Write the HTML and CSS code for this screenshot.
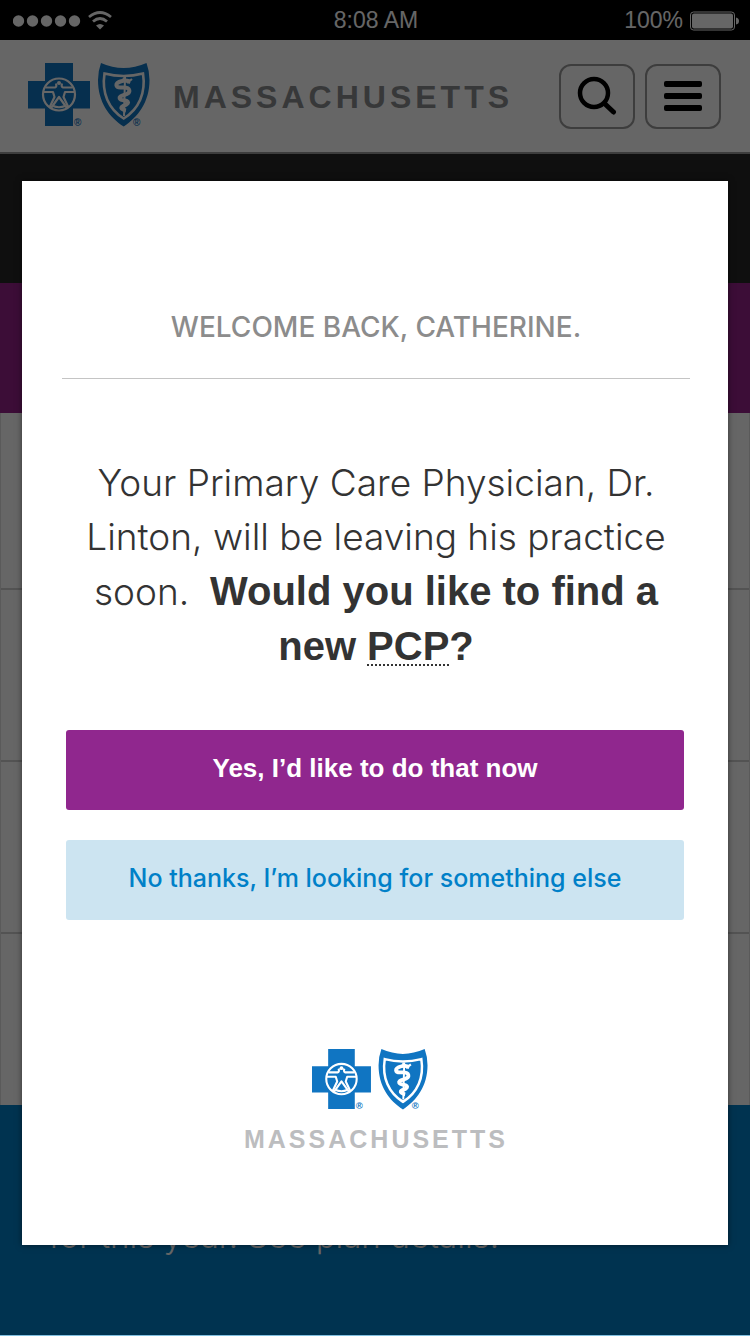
FILE: index.html
```html
<!DOCTYPE html>
<html lang="en">
<head>
<meta charset="utf-8">
<meta name="viewport" content="width=device-width, initial-scale=1">
<title>Welcome back</title>
<link rel="stylesheet" href="styles.css">
</head>
<body>
<svg class="sprite" aria-hidden="true">
  <symbol id="logo" viewBox="0 0 122 66">
    <path class="logo-blue" d="M17 0H45V18H62V45.500H45V63H17V45.500H0V18H17Z"/>
    <g class="logo-line" transform="translate(31 31.500)">
      <circle r="16"/>
      <path d="M-13.500 -7H-4Q-2 -7.500 -3 -11M13.500 -7H4Q2 -7.500 3 -11"/>
      <path d="M-15.500 -2.500H-6L-4.500 2.500L-9.500 13M15.500 -2.500H6L4.500 2.500L9.500 13"/>
      <path d="M-8 13.500L0 2.500L8 13.500"/>
      <path d="M-6 11.500Q0 14 6 11.500"/>
      <circle class="logo-head" cy="-11.500" r="2"/>
    </g>
    <path class="logo-blue" d="M73 0Q95.500 10 118.500 0Q121.500 8 121.500 17C121.500 39 110 54 95.700 63.500C81 54 70 39 70 17Q70 8 73 0Z"/>
    <path class="logo-border" d="M76.500 10.500Q95.500 15.500 115 10.500C118 30 111 46 95.700 55.500C80.500 46 73.500 30 76.500 10.500Z"/>
    <path class="logo-staff" d="M97 14L96 53"/>
    <path class="logo-snake" d="M102 18.500Q97 17 94 18C86 20 87 25 94 24.500C103 24 104 30 96 32C89 34 91 37 97 37.500C103 39 99 42 95 43C91 45 95 47 98 47.500"/>
    <path class="logo-line" d="M95 15L102 20M104 16L99 20"/>
  </symbol>
</svg>

<div class="screen">
  <div class="page">
    <div class="status">
      <div class="signal">
        <svg width="100" height="24" viewBox="0 0 100 24" fill="#fff">
          <circle cx="5.500" cy="12" r="5.700"/><circle cx="19.500" cy="12" r="5.700"/><circle cx="33.500" cy="12" r="5.700"/><circle cx="47.500" cy="12" r="5.700"/><circle cx="61.500" cy="12" r="5.700"/>
          <g fill="none" stroke="#fff" stroke-width="2.800"><path d="M76 8Q87 -1 98 8"/><path d="M80 12.500Q87 6.500 94 12.500"/></g>
          <path d="M83 16.500Q87 13.500 91 16.500L87 20.500Z"/>
        </svg>
      </div>
      <div class="clock">8:08 AM</div>
      <div class="battery">
        <span>100%</span>
        <svg width="49" height="20" viewBox="0 0 49 20">
          <rect x="0.500" y="1" width="44" height="18" rx="3" fill="none" stroke="#fff"/>
          <rect x="2" y="2.500" width="41" height="15" rx="2" fill="#fff"/>
          <path d="M46 6.500Q49 7 49 10Q49 13 46 13.500Z" fill="#fff"/>
        </svg>
      </div>
    </div>

    <header class="header">
      <svg class="header-logo" viewBox="0 0 122 66" role="img" aria-label="Blue Cross Blue Shield">
        <use href="#logo"/>
        <text class="logo-mark" x="46" y="63">®</text>
        <text class="logo-mark" x="105" y="63">®</text>
      </svg>
      <span class="header-name">MASSACHUSETTS</span>
      <button class="tool" type="button" aria-label="Search">
        <svg width="40" height="40" viewBox="0 0 40 40" fill="none" stroke="#000"><circle cx="17" cy="17" r="14" stroke-width="4.500"/><path d="M27.500 27.500L36.500 36" stroke-width="5" stroke-linecap="round"/></svg>
      </button>
      <button class="tool" type="button" aria-label="Menu">
        <svg width="38" height="30" viewBox="0 0 38 30"><rect width="38" height="6" rx="2"/><rect y="12" width="38" height="6" rx="2"/><rect y="24" width="38" height="6" rx="2"/></svg>
      </button>
    </header>

    <div class="hero"></div>
    <div class="band"></div>
    <div class="rows">
      <div class="row"></div>
      <div class="row"></div>
      <div class="row"></div>
      <div class="row"></div>
    </div>
    <footer class="plan">for this year. See plan details.</footer>
  </div>

  <div class="overlay">
    <section class="modal" role="dialog" aria-labelledby="welcome">
      <h1 class="welcome" id="welcome">WELCOME BACK, CATHERINE.</h1>
      <p class="message">Your Primary Care Physician, Dr. Linton, will be leaving his practice soon.&nbsp; <strong>Would you like to find a new <abbr class="term" title="Primary Care Physician">PCP</abbr>?</strong></p>
      <div class="actions">
        <button class="action action-yes" type="button">Yes, I’d like to do that now</button>
        <button class="action action-no" type="button">No thanks, I’m looking for something else</button>
      </div>
      <div class="brand">
        <svg class="brand-logo" viewBox="0 0 122 66" role="img" aria-label="Blue Cross Blue Shield">
          <use href="#logo"/>
          <text class="logo-mark" x="46" y="63">®</text>
          <text class="logo-mark" x="105" y="63">®</text>
        </svg>
        <span class="brand-name">MASSACHUSETTS</span>
      </div>
    </section>
  </div>
</div>
</body>
</html>
```
FILE: styles.css
```css
* { box-sizing: border-box; }

body {
  margin: 0;
  background: #80bfdf;
  font-family: "Liberation Sans", Arial, sans-serif;
}

button { font: inherit; cursor: pointer; }

.sprite { position: absolute; width: 0; height: 0; }
.logo-blue { fill: #1075c2; }
.logo-line { fill: none; stroke: #fff; stroke-width: 2.200; stroke-linejoin: round; }
.logo-border { fill: none; stroke: #fff; stroke-width: 2.600; }
.logo-head { fill: #fff; stroke: none; }
.logo-staff { fill: none; stroke: #fff; stroke-width: 2; }
.logo-snake { fill: none; stroke: #fff; stroke-width: 4; }
.logo-mark { fill: #1075c2; font-size: 10px; font-weight: bold; }

.screen { position: relative; }
.page {
  display: flex;
  flex-direction: column;
  min-height: calc(100vh - 1px);
  background: #fff;
}

.status {
  display: grid;
  grid-template-columns: 1fr auto 1fr;
  align-items: center;
  height: 40px;
  padding: 1px 11px 0 13px;
  background: #000;
  color: #fff;
  font-size: 23px;
}
.signal svg { display: block; }
.battery { display: flex; justify-content: flex-end; align-items: center; gap: 7px; }

.header {
  display: flex;
  align-items: center;
  gap: 10px;
  height: 114px;
  padding: 0 29px 0 28px;
  border: 1px solid #e0e0e0;
  border-width: 0 0 2px;
  border-bottom-color: #999;
}
.header-logo { width: 122px; height: 66px; overflow: visible; }
.header-name {
  flex: 1;
  padding: 2px 0 0 13px;
  color: #8a8c8e;
  font-size: 32px;
  font-weight: bold;
  letter-spacing: 4px;
}
.tool {
  display: flex;
  align-items: center;
  justify-content: center;
  width: 76px;
  height: 65px;
  padding: 0;
  border: 2px solid #999;
  border-radius: 12px;
  background: none;
}

.hero { height: 129px; background: #262626; }
.band { height: 130px; background: #96218b; }
.rows { border: 1px solid #e0e0e0; border-width: 0 1px; }
.row { height: 172px; border-bottom: 2px solid #d0d0d0; }
.row:first-child { height: 177px; }
.row:last-child { height: 171px; border-bottom: 0; }

.plan {
  flex: 1;
  min-height: 230px;
  padding: 111px 49px 0;
  background: #0080c8;
  color: #fff;
  font-family: Inter, "Liberation Sans", sans-serif;
  font-size: 33px;
  font-weight: 300;
  line-height: 40px;
}

.overlay {
  position: absolute;
  inset: 0;
  padding: 181px 22px 90px;
  background: rgba(0, 0, 0, 0.6);
}
.modal {
  height: 100%;
  padding: 126px 38px 40px 40px;
  background: #fff;
  box-shadow: 0 0 6px rgba(0, 0, 0, 0.5);
  text-align: center;
}
.welcome {
  margin: 0;
  padding-bottom: 31px;
  border-bottom: 1px solid #c4c4c4;
  color: #8c8c8c;
  font-family: Inter, "Liberation Sans", sans-serif;
  font-size: 28px;
  font-weight: 500;
  line-height: 40px;
}
.message {
  margin: 77px 12px 56px;
  color: #333;
  font-family: Inter, "Liberation Sans", sans-serif;
  font-size: 37px;
  font-weight: 300;
  line-height: 54px;
}
.message strong { font-family: "Liberation Sans", Arial, sans-serif; font-size: 40px; font-weight: bold; }
.term {
  text-decoration: underline dotted 2px;
  text-underline-offset: 4px;
  text-decoration-skip-ink: none;
}
.actions { display: grid; gap: 30px; padding: 0 6px 0 4px; }
.action {
  height: 80px;
  padding: 0 0 4px;
  border: 0;
  border-radius: 3px;
  font-size: 26px;
  font-weight: bold;
}
.action-yes { background: #90278e; color: #fff; }
.action-no {
  background: #cce4f1;
  color: #0080c8;
  font-family: Inter, "Liberation Sans", sans-serif;
  font-size: 25px;
  font-weight: 500;
}
.brand {
  display: flex;
  flex-direction: column;
  align-items: center;
  gap: 13px;
  margin-top: 129px;
}
.brand-logo { width: 116px; height: 63px; margin-right: 12px; overflow: visible; }
.brand-name {
  color: #bcbdbf;
  font-size: 25px;
  font-weight: bold;
  letter-spacing: 3px;
}
```
